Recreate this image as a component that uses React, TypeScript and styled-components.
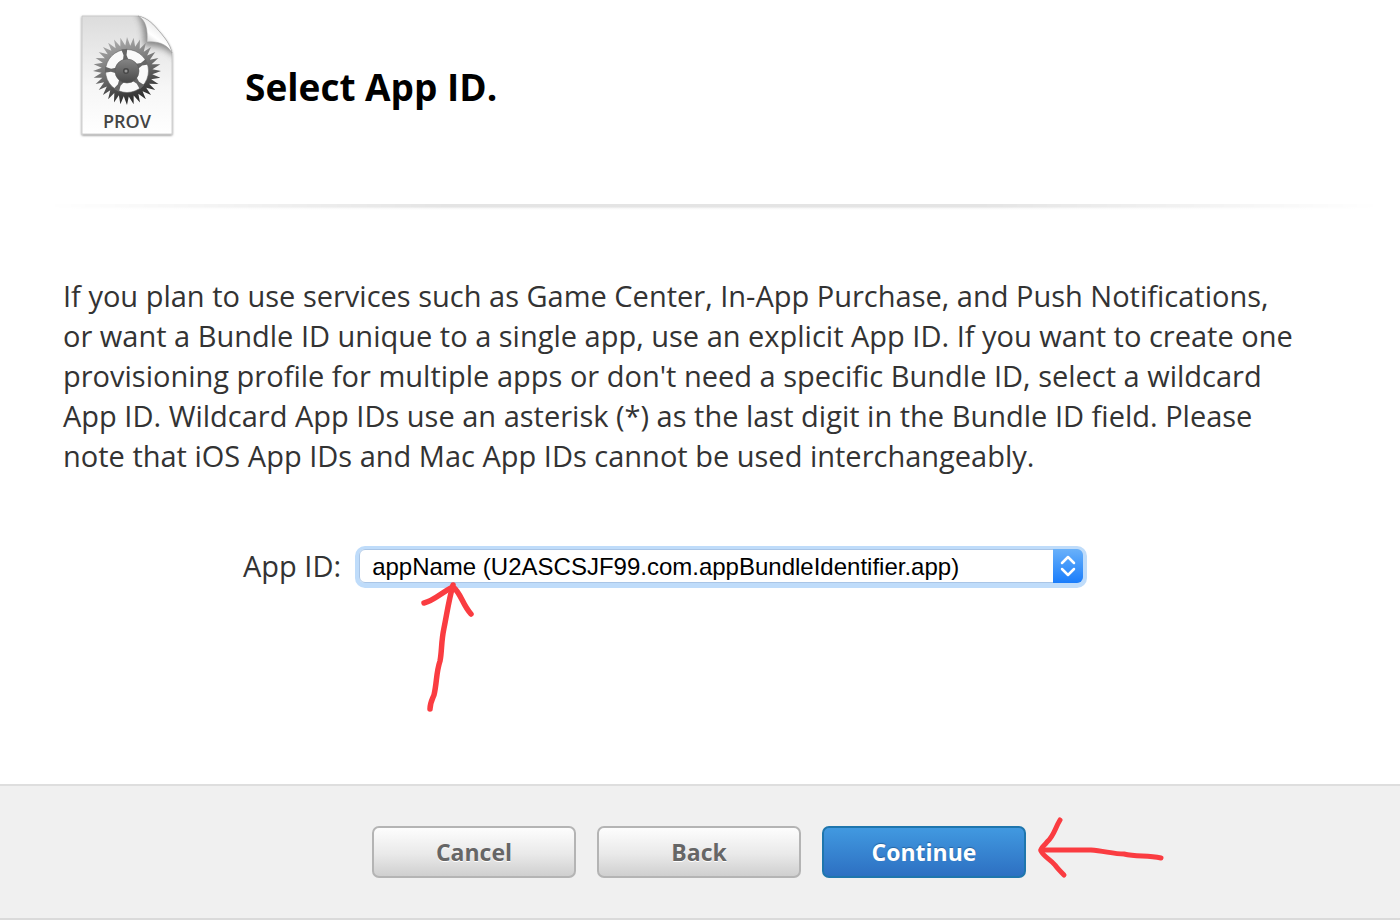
import React from "react";
import styled, { createGlobalStyle } from "styled-components";

const GlobalStyle = createGlobalStyle`
  *, *::before, *::after { box-sizing: border-box; }
  body {
    margin: 0;
    background: #fff;
    color: #333;
    font-family: "Open Sans", "Noto Sans", sans-serif;
  }
`;

const Page = styled.div`
  display: flex;
  flex-direction: column;
  min-height: 100vh;
`;

const Header = styled.header`
  display: flex;
  align-items: flex-start;
  gap: 64px;
  height: 204px;
  padding: 8px 72px 0;
`;

const Title = styled.h1`
  margin: 0;
  padding-top: 54px;
  color: #000;
  font-size: 37px;
  font-weight: 700;
  line-height: 50px;
`;

const Divider = styled.div`
  height: 6px;
  margin: 0 20px 0 48px;
  background: linear-gradient(#e4e4e4 0 3px, #f5f5f5 4px, #fff);
  mask-image: linear-gradient(to right, transparent, #000 30%, #000 70%, transparent);
`;

const Content = styled.main`
  flex: 1;
  padding: 66px 63px 0;
`;

const Description = styled.p`
  margin: 0;
  font-size: 29px;
  line-height: 40px;
  white-space: nowrap;
`;

const Field = styled.div`
  display: flex;
  align-items: center;
  gap: 18px;
  margin: 70px 254px 0 180px;
`;

const Label = styled.label`
  font-size: 29px;
  line-height: 40px;
  white-space: nowrap;
`;

const SelectBox = styled.div`
  position: relative;
  flex: 1;
  display: flex;
  height: 34px;
  border-radius: 6px;
  box-shadow: 0 1px 0 4px #bfdcfa;
`;

const Select = styled.select`
  appearance: none;
  width: 100%;
  margin: 0;
  padding: 0 40px 0 12px;
  border: 1px solid #a9c5e6;
  border-radius: 6px;
  outline: 0;
  background: #fff;
  color: #000;
  font-family: "Liberation Sans", Arial, sans-serif;
  font-size: 24px;
`;

const Stepper = styled.span`
  position: absolute;
  top: 0;
  right: 0;
  display: flex;
  align-items: center;
  justify-content: center;
  width: 30px;
  height: 34px;
  border-radius: 0 6px 6px 0;
  background: linear-gradient(#69b1fa, #1a7dfb);
  pointer-events: none;
`;

const Footer = styled.footer`
  display: flex;
  justify-content: center;
  padding: 40px 22px 40px 20px;
  border-top: 2px solid #dedede;
  border-bottom: 2px solid #dadada;
  background: #f0f0f0;
`;

const Actions = styled.div`
  position: relative;
  display: flex;
  gap: 21px;
`;

const Button = styled.button<{ $primary?: boolean }>`
  width: 204px;
  height: 52px;
  padding: 0;
  border: 2px solid ${(p) => (p.$primary ? "#1f76ad" : "#b4b4b4")};
  border-radius: 7px;
  background: ${(p) =>
    p.$primary ? "linear-gradient(#4199e0, #2d70c2)" : "linear-gradient(#fdfdfd, #e9e9e9 55%, #cfcfcf)"};
  color: ${(p) => (p.$primary ? "#fff" : "#666")};
  font-family: inherit;
  font-size: 23px;
  font-weight: 700;
  line-height: 32px;
  text-shadow: ${(p) => (p.$primary ? "0 -1px 1px #2565a0" : "0 1px 0 #fff")};
`;

const FieldArrow = styled.svg`
  position: absolute;
  top: 30px;
  left: 56px;
  pointer-events: none;
`;

const ContinueArrow = styled.svg`
  position: absolute;
  top: -12px;
  left: 100%;
  pointer-events: none;
`;

const TEETH = 32;
const gearPoints = Array.from({ length: TEETH * 2 }, (_, i) => {
  const angle = (i * Math.PI) / TEETH + (i % 2 ? 0.03 : 0);
  const radius = i % 2 ? 25.5 : 34;
  return `${(55 + radius * Math.cos(angle)).toFixed(2)},${(63 + radius * Math.sin(angle)).toFixed(2)}`;
}).join(" ");
const spokes = [-97, -25, 47, 119, 183];

function ProvisioningIcon() {
  return (
    <svg width="109" height="134" viewBox="0 0 109 134" role="img" aria-label="Provisioning profile">
      <defs>
        <linearGradient id="sheet" x1="0" y1="0" x2="0" y2="1">
          <stop offset="0" stopColor="#dcdcdc" />
          <stop offset="0.6" stopColor="#f6f6f6" />
          <stop offset="1" stopColor="#fff" />
        </linearGradient>
        <linearGradient id="gear" gradientUnits="userSpaceOnUse" x1="44" y1="30" x2="66" y2="96">
          <stop offset="0" stopColor="#adadad" />
          <stop offset="0.5" stopColor="#6c6c6c" />
          <stop offset="1" stopColor="#222" />
        </linearGradient>
        <linearGradient id="hub" x1="0" y1="0" x2="0" y2="1">
          <stop offset="0" stopColor="#858585" />
          <stop offset="1" stopColor="#484848" />
        </linearGradient>
        <linearGradient id="fold" gradientUnits="userSpaceOnUse" x1="75" y1="35" x2="86" y2="20">
          <stop offset="0" stopColor="#d4d4d4" />
          <stop offset="0.5" stopColor="#fff" />
          <stop offset="1" stopColor="#eee" />
        </linearGradient>
        <filter id="sheetShadow" x="-10%" y="-10%" width="120%" height="120%">
          <feDropShadow dx="0" dy="1" stdDeviation="1" floodColor="#000" floodOpacity="0.5" />
        </filter>
        <filter id="foldShadow" x="-40%" y="-40%" width="180%" height="180%">
          <feGaussianBlur stdDeviation="3" />
        </filter>
        <clipPath id="sheetClip">
          <path d="M10 8 H66 C76 10 82 17 87 23 C93 30 98 36 100 45 V126 H10 Z" />
        </clipPath>
      </defs>
      <path
        d="M10 8 H66 C76 10 82 17 87 23 C93 30 98 36 100 45 V126 H10 Z"
        fill="url(#sheet)"
        stroke="#c4c4c4"
        strokeWidth="0.8"
        filter="url(#sheetShadow)"
      />
      <g clipPath="url(#sheetClip)">
        <path d="M64 4 C71 12 72 24 72 38 C84 37 96 40 104 50 V4 Z" fill="#666" opacity="0.75" filter="url(#foldShadow)" />
      </g>
      <path d="M66 8 C74 12 76 22 75 34 C86 33 95 36 100 45 C98 36 93 30 87 23 C82 17 76 10 66 8 Z" fill="url(#fold)" stroke="#999" strokeWidth="0.5" />
      <polygon points={gearPoints} fill="url(#gear)" />
      <circle cx="55" cy="63" r="21.500" fill="#fafafa" stroke="#666" strokeWidth="0.6" />
      {spokes.map((angle) => (
        <path key={angle} d="M65 60 L71 61.500 L77 60 V66 L71 64.500 L65 66 Z" fill="#666" transform={`rotate(${angle} 55 63)`} />
      ))}
      <circle cx="55" cy="63" r="12" fill="url(#hub)" stroke="#5a5a5a" strokeWidth="0.6" />
      <circle cx="54" cy="63" r="3" fill="#484848" />
      <circle cx="54" cy="63" r="1.500" fill="#999" />
      <text x="55" y="120" textAnchor="middle" fontFamily="Open Sans, sans-serif" fontSize="18" fontWeight="600" fill="#444">
        PROV
      </text>
    </svg>
  );
}

export default function App() {
  return (
    <Page>
      <GlobalStyle />
      <Header>
        <ProvisioningIcon />
        <Title>Select App ID.</Title>
      </Header>
      <Divider />
      <Content>
        <Description>
          If you plan to use services such as Game Center, In-App Purchase, and Push Notifications,
          <br />
          or want a Bundle ID unique to a single app, use an explicit App ID. If you want to create one
          <br />
          provisioning profile for multiple apps or don't need a specific Bundle ID, select a wildcard
          <br />
          App ID. Wildcard App IDs use an asterisk (*) as the last digit in the Bundle ID field. Please
          <br />
          note that iOS App IDs and Mac App IDs cannot be used interchangeably.
        </Description>
        <Field>
          <Label htmlFor="app-id">App ID:</Label>
          <SelectBox>
            <Select id="app-id">
              <option>appName (U2ASCSJF99.com.appBundleIdentifier.app)</option>
            </Select>
            <Stepper>
              <svg width="16" height="24" viewBox="0 0 16 24" fill="none" stroke="#fff" strokeWidth="2.500" strokeLinecap="round" strokeLinejoin="round" aria-hidden="true">
                <path d="M2 9 L8 3 L14 9 M2 15 L8 21 L14 15" />
              </svg>
            </Stepper>
            <FieldArrow width="64" height="136" viewBox="0 0 64 136" fill="none" stroke="#fa3c41" strokeWidth="5.500" strokeLinecap="round" strokeLinejoin="round" aria-hidden="true">
              <path d="M38 6 C34 20 32 34 29 49 C26 63 27 72 25 82 C21 94 22 103 19 116 C17 121 15 124 15 130" />
              <path d="M9 24 C19 22 27 13 38 8 C46 14 47 25 56 35" />
            </FieldArrow>
          </SelectBox>
        </Field>
      </Content>
      <Footer>
        <Actions>
          <Button type="button">Cancel</Button>
          <Button type="button">Back</Button>
          <Button type="button" $primary>Continue</Button>
          <ContinueArrow width="144" height="68" viewBox="0 0 144 68" fill="none" stroke="#fa3c41" strokeWidth="5" strokeLinecap="round" strokeLinejoin="round" aria-hidden="true">
            <path d="M15 36 H65 C78 37 88 40 98 40 C111 43 121 41 135 44" />
            <path d="M34 6 C29 14 28 22 21 28 C18 32 14 34 15 37 C18 43 24 45 29 51 C32 55 34 57 38 61" />
          </ContinueArrow>
        </Actions>
      </Footer>
    </Page>
  );
}
